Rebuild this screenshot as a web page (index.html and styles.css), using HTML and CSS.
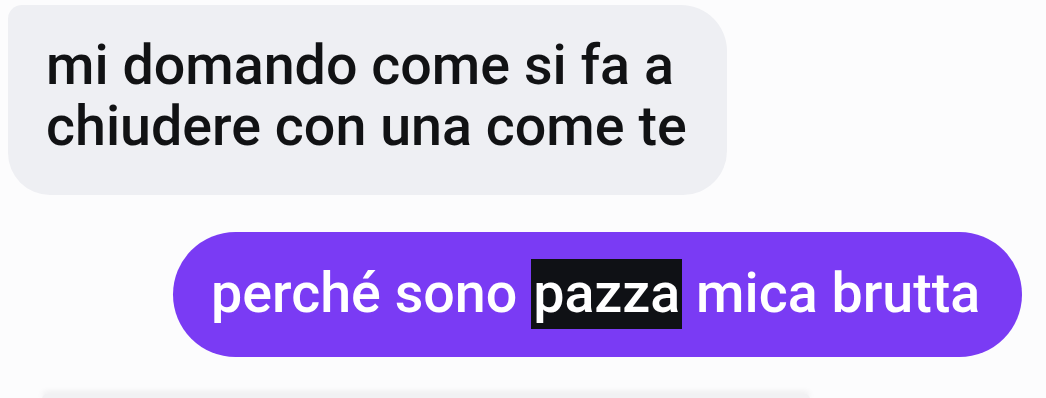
FILE: index.html
```html
<!DOCTYPE html>
<html lang="it">
<head>
  <meta charset="UTF-8" />
  <meta name="viewport" content="width=device-width, initial-scale=1.0" />
  <title>Chat</title>
  <link rel="stylesheet" href="styles.css">
</head>
<body>
  <div class="thread">
    <!-- received -->
    <div class="bubble received">
      mi domando come si fa a<br>chiudere con una come te
    </div>

    <!-- sent -->
    <div class="bubble sent">
      perché sono <span class="mark">pazza</span> mica brutta
    </div>

    <!-- next one, cut off -->
    <div class="bubble next"></div>
  </div>
</body>
</html>
```

FILE: styles.css
```css
body, html {
  margin: 0;
  padding: 0;
  width: 100%;
  height: 100%;
  overflow: hidden;
  background: #fcfcfd;
}
.thread {
  display: flex;
  flex-direction: column;
  align-items: flex-start;
  padding: 5px 24px 0 8px;
  gap: 37px;
  font-family: Roboto, "Liberation Sans", Arial, sans-serif;
  font-weight: 500;
  font-size: 55.6px;
  line-height: 61px;
}
.bubble {
  box-sizing: border-box;
  white-space: nowrap;
}
.received {
  width: 719px;
  height: 190px;
  background: #eeeff3;
  color: #111214;
  padding: 30px 30px 0 38px;
  border-radius: 14px 46px 44px 42px;
}
.sent {
  align-self: flex-end;
  width: 849px;
  height: 125px;
  background: #7a3bf4;
  color: #fff;
  padding: 31px 30px 0 38px;
  border-radius: 63px;
}
.mark {
  background: #0f1115;
  padding: 1px 2px 3px;
}
.next {
  margin-left: 34px;
  width: 768px;
  height: 5px;
  background: #f1f1f3;
  border-radius: 22px 22px 0 0;
  box-shadow: 0 -2px 6px rgba(0, 0, 0, 0.08);
}
```
